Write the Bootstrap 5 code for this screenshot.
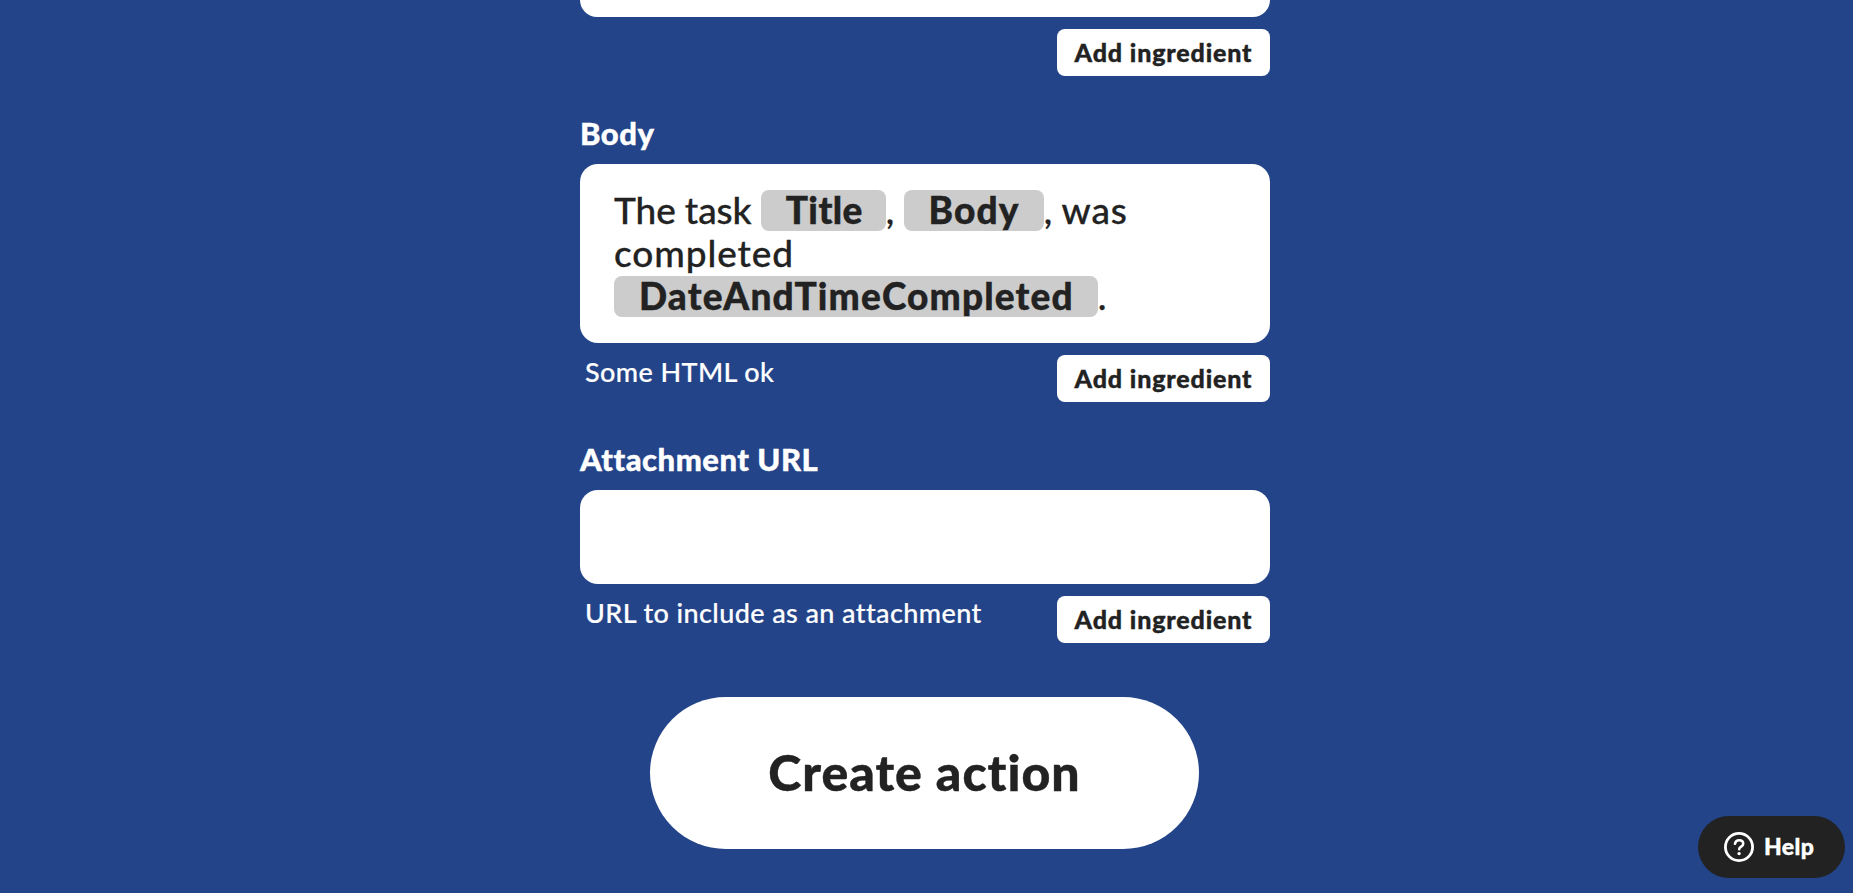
<!DOCTYPE html>
<html lang="en">

<head>
    <meta charset="UTF-8">
    <meta name="viewport" content="width=device-width, initial-scale=1.0">
    <title>Create action</title>
    <link href="https://cdn.jsdelivr.net/npm/bootstrap@5.3.0/dist/css/bootstrap.min.css" rel="stylesheet">
    <style>
        body {
            background-color: #234489;
            color: #222;
            font-family: Lato, "Open Sans", sans-serif;
            padding-right: 3px;
            min-height: 893px;
        }

        .action-form {
            width: 690px;
        }

        .field-label,
        .ingredient,
        .btn-ingredient,
        .btn-create,
        .btn-help {
            font-weight: 900;
            -webkit-text-stroke: .4px currentColor;
        }

        .field-label {
            color: #fff;
            font-size: 31px;
            letter-spacing: .5px;
            line-height: 36px;
            margin: 39px 0 13px;
        }

        .field-box {
            background: #fff;
            border-radius: 18px;
            padding: 24px 34px 26px;
            font-size: 37px;
            font-weight: 500;
            line-height: 43px;
            min-height: 94px;
            -webkit-text-stroke: .3px currentColor;
        }

        .field-box-cut {
            min-height: 17px;
            padding: 0;
            border-radius: 0 0 18px 18px;
        }

        .word-tight {
            letter-spacing: -.1px;
        }

        .word-wide {
            letter-spacing: .9px;
        }

        .ingredient {
            background: #ccc;
            border-radius: 8px;
            display: inline-block;
            height: 41px;
            letter-spacing: 1.15px;
            line-height: 39px;
            padding: 0 24px 0 25px;
            vertical-align: top;
            margin-top: 2px;
        }

        .ingredient-short {
            letter-spacing: .4px;
            padding-right: 23px;
        }

        .field-help {
            color: #fff;
            font-size: 27px;
            font-weight: 500;
            letter-spacing: .4px;
            line-height: 34px;
            padding-left: 5px;
            -webkit-text-stroke: .2px currentColor;
        }

        .btn-ingredient {
            width: 213px;
            height: 47px;
            padding: 0;
            border: 0;
            border-radius: 8px;
            font-size: 25px;
            letter-spacing: .85px;
            line-height: 45px;
            color: #222;
        }

        .btn-create {
            width: 549px;
            height: 152px;
            margin: 54px 1px 0 0;
            padding: 0 0 2px;
            border: 0;
            font-size: 50px;
            letter-spacing: 1px;
            color: #222;
        }

        .btn-help {
            right: 8px;
            bottom: 15px;
            width: 147px;
            height: 62px;
            padding: 0 0 0 25px;
            border: 0;
            background: #222;
            color: #fff;
            font-size: 23px;
            letter-spacing: .4px;
        }

        .btn-help span {
            margin-left: 9px;
            padding-bottom: 2px;
        }
    </style>
</head>

<body class="overflow-hidden">
    <main class="action-form mx-auto">
        <div class="field-box field-box-cut"></div>
        <div class="d-flex justify-content-end pt-2 mt-1">
            <button type="button" class="btn btn-light bg-white btn-ingredient">Add ingredient</button>
        </div>

        <div class="field-label">Body</div>
        <div class="field-box">
            <span class="word-tight">The task</span> <span class="ingredient ingredient-short">Title</span>, <span class="ingredient">Body</span>, <span class="word-wide">was</span><br>
            <span class="word-wide">completed</span><br>
            <span class="ingredient">DateAndTimeCompleted</span>.
        </div>
        <div class="d-flex justify-content-between pt-2 mt-1">
            <div class="field-help">Some HTML ok</div>
            <button type="button" class="btn btn-light bg-white btn-ingredient">Add ingredient</button>
        </div>

        <div class="field-label">Attachment URL</div>
        <div class="field-box"></div>
        <div class="d-flex justify-content-between pt-2 mt-1">
            <div class="field-help">URL to include as an attachment</div>
            <button type="button" class="btn btn-light bg-white btn-ingredient">Add ingredient</button>
        </div>

        <div class="text-center">
            <button type="button" class="btn btn-light bg-white rounded-pill btn-create">Create action</button>
        </div>
    </main>

    <button type="button" class="btn btn-help rounded-pill position-fixed d-flex align-items-center">
        <svg width="32" height="32" viewBox="0 0 32 32" fill="none" stroke="#fff" stroke-linecap="round">
            <circle cx="16" cy="16" r="13.6" stroke-width="2.8" />
            <path d="M12 12.8c.3-2.4 2-3.6 4.2-3.6 2.3 0 4 1.4 4 3.5 0 3-4 2.9-4 5.6" stroke-width="2.6" />
            <circle cx="16.1" cy="22.6" r="1.7" fill="#fff" stroke="none" />
        </svg>
        <span>Help</span>
    </button>

    <script src="https://cdn.jsdelivr.net/npm/bootstrap@5.3.0/dist/js/bootstrap.bundle.min.js"></script>
</body>

</html>
